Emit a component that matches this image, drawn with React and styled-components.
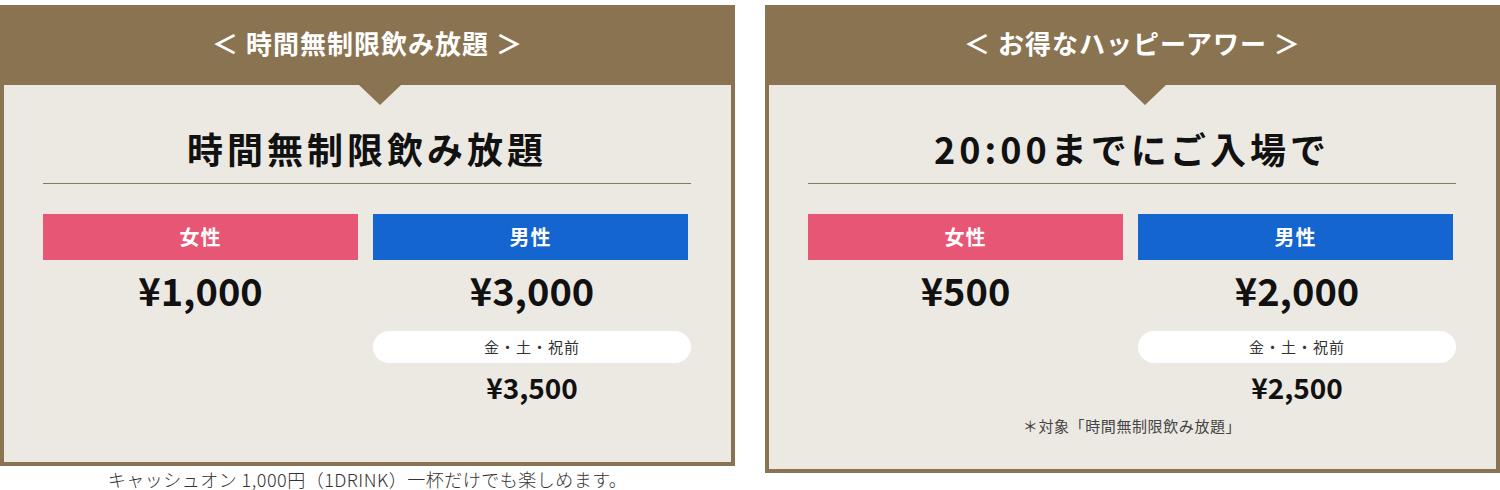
import React from 'react';
import styled, { createGlobalStyle } from 'styled-components';

const GlobalStyle = createGlobalStyle`
  body {
    margin: 0;
    background: #fff;
    font-family: 'Noto Sans CJK JP', 'Noto Sans', sans-serif;
    color: #111;
  }
`;

const Page = styled.div`
  display: flex;
  gap: 30px;
  padding-top: 5px;
  width: 1500px;
  align-items: flex-start;
`;

const Column = styled.div`
  width: 735px;
  display: flex;
  flex-direction: column;
`;

const Card = styled.div`
  background: #8a7350;
  padding: 0 4px 4px;
  display: flex;
  flex-direction: column;
`;

const Header = styled.h2`
  margin: 0 -4px;
  height: 80px;
  display: flex;
  align-items: center;
  justify-content: center;
  color: #fff;
  font-size: 26px;
  font-weight: 700;
  letter-spacing: 1px;
  padding-bottom: 6px;
  box-sizing: border-box;
`;

const Body = styled.div`
  position: relative;
  background: #ece9e3;
  padding: 38px 40px ${p => p.$pb}px 39px;
  text-align: center;
`;

const Arrow = styled.span`
  position: absolute;
  top: 0;
  left: calc(50% + 12px);
  transform: translateX(-50%);
  border-left: 21px solid transparent;
  border-right: 21px solid transparent;
  border-top: 20px solid #8a7350;
`;

const Title = styled.h3`
  margin: 0;
  font-size: 36px;
  line-height: 50px;
  font-weight: 700;
  letter-spacing: 4px;
  padding-bottom: 10px;
  border-bottom: 1px solid #8a7a5c;
`;

const Grid = styled.div`
  display: grid;
  grid-template-columns: 315px 318px;
  column-gap: 15px;
  margin-top: 30px;
  align-items: start;
`;

const Cell = styled.div`
  display: flex;
  flex-direction: column;
  align-items: stretch;
`;

const Label = styled.div`
  width: 315px;
  height: 46px;
  line-height: 45px;
  background: ${p => (p.$male ? '#1565d0' : '#e75674')};
  color: #fff;
  font-size: 20px;
  font-weight: 700;
  letter-spacing: 1px;
`;

const Price = styled.div`
  margin-top: 3px;
  font-size: 38px;
  line-height: 53px;
  font-weight: 700;
`;

const Pill = styled.div`
  margin-top: 15px;
  height: 32px;
  line-height: 32px;
  border-radius: 16px;
  background: #fff;
  font-size: 15px;
  letter-spacing: 1px;
  color: #333;
`;

const SubPrice = styled.div`
  margin-top: 6px;
  font-size: 28px;
  line-height: 36px;
  font-weight: 700;
`;

const Note = styled.p`
  margin: 11px 0 0;
  font-size: 15px;
  letter-spacing: 0.6px;
  line-height: 20px;
  color: #444;
`;

const Caption = styled.p`
  margin: 0;
  text-align: center;
  font-size: 18px;
  letter-spacing: 0.5px;
  line-height: 26px;
  font-weight: 300;
  color: #333;
`;

const plans = [
  {
    header: '＜ 時間無制限飲み放題 ＞',
    title: '時間無制限飲み放題',
    female: '¥1,000',
    male: '¥3,000',
    maleWeekend: '¥3,500',
    pb: 57,
    caption: 'キャッシュオン 1,000円（1DRINK）一杯だけでも楽しめます。',
  },
  {
    header: '＜ お得なハッピーアワー ＞',
    title: '20:00までにご入場で',
    female: '¥500',
    male: '¥2,000',
    maleWeekend: '¥2,500',
    note: '＊対象「時間無制限飲み放題」',
    pb: 33,
  },
];

const PlanCard = ({ plan }) => (
  <Column>
    <Card>
      <Header>{plan.header}</Header>
      <Body $pb={plan.pb}>
        <Arrow />
        <Title>{plan.title}</Title>
        <Grid>
          <Cell>
            <Label>女性</Label>
            <Price>{plan.female}</Price>
          </Cell>
          <Cell>
            <Label $male>男性</Label>
            <Price>{plan.male}</Price>
            <Pill>金・土・祝前</Pill>
            <SubPrice>{plan.maleWeekend}</SubPrice>
          </Cell>
        </Grid>
        {plan.note && <Note>{plan.note}</Note>}
      </Body>
    </Card>
    {plan.caption && <Caption>{plan.caption}</Caption>}
  </Column>
);

export default function App() {
  return (
    <>
      <GlobalStyle />
      <Page>
        {plans.map(p => (
          <PlanCard key={p.title} plan={p} />
        ))}
      </Page>
    </>
  );
}
